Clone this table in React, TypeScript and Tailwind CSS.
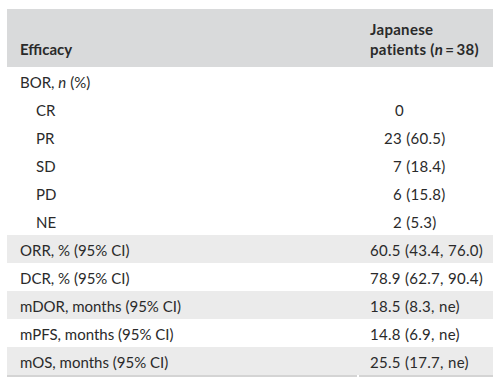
import React from "react";

type Row = { label: React.ReactNode; value: string; indent?: boolean; shade?: boolean; vpad?: string };

const bor: Row[] = [
  { label: <>BOR, <i>n</i> (%)</>, value: "" },
  { label: "CR", value: "0", indent: true, vpad: "pl-[38px]" },
  { label: "PR", value: "23 (60.5)", indent: true, vpad: "pl-[27px]" },
  { label: "SD", value: "7 (18.4)", indent: true, vpad: "pl-[36px]" },
  { label: "PD", value: "6 (15.8)", indent: true, vpad: "pl-[36px]" },
  { label: "NE", value: "2 (5.3)", indent: true, vpad: "pl-[36px]" },
];

const rest: Row[] = [
  { label: "ORR, % (95% CI)", value: "60.5 (43.4, 76.0)", shade: true },
  { label: "DCR, % (95% CI)", value: "78.9 (62.7, 90.4)" },
  { label: "mDOR, months (95% CI)", value: "18.5 (8.3, ne)", shade: true },
  { label: "mPFS, months (95% CI)", value: "14.8 (6.9, ne)" },
  { label: "mOS, months (95% CI)", value: "25.5 (17.7, ne)", shade: true },
];

function TableRow({ r }: { r: Row }) {
  return (
    <div className={`flex h-[28px] items-center pt-[2px] ${r.shade ? "bg-[#ebebeb]" : "bg-white"}`}>
      <div className={`w-[350px] ${r.indent ? "pl-[29px]" : "pl-[13px]"}`}>{r.label}</div>
      <div className="w-[136px] pl-[13px] whitespace-nowrap tracking-[0.3px]">
        <span className={r.vpad ? `inline-block ${r.vpad} -ml-[13px]` : ""}>{r.value}</span>
      </div>
    </div>
  );
}

export default function App() {
  return (
    <div
      className="w-[499px] h-[382px] bg-white pt-[9px] pl-[7px] text-[15px] leading-[20px] text-[#2a2a2a]"
      style={{ fontFamily: "Lato, 'Open Sans', sans-serif" }}
    >
      <div className="w-[486px]">
        <div className="flex h-[58px] items-end bg-[#d9dadb] pb-[8px] font-bold">
          <div className="w-[350px] pl-[13px]">Efficacy</div>
          <div className="w-[136px] pl-[13px] whitespace-nowrap tracking-[0.3px]">
            Japanese
            <br />
            patients (<i>n</i>{"\u2009=\u2009"}38)
          </div>
        </div>
        {bor.map((r, i) => (
          <TableRow key={i} r={r} />
        ))}
        {rest.map((r, i) => (
          <TableRow key={i} r={r} />
        ))}
        <div className="flex h-[2px] gap-[2px]">
          <div className="w-[350px] bg-[#d4d4d4]" />
          <div className="flex-1 bg-[#d4d4d4]" />
        </div>
      </div>
    </div>
  );
}
